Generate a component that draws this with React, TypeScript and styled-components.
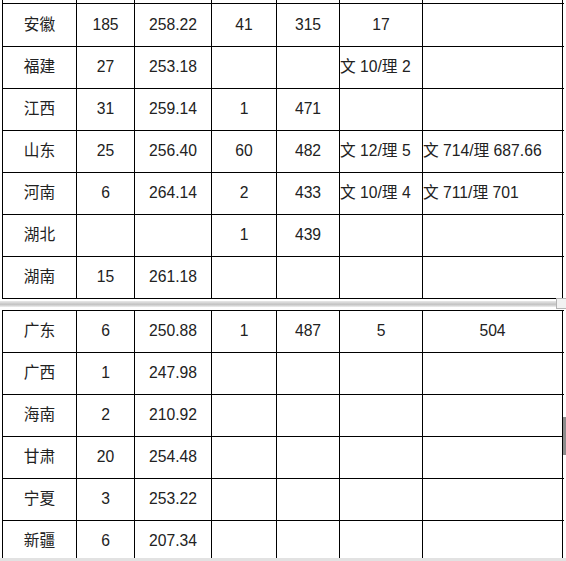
import React from "react";
import styled, { createGlobalStyle } from "styled-components";

const GlobalStyle = createGlobalStyle`
  html, body {
    margin: 0;
    padding: 0;
    background: #ffffff;
  }
`;

const Page = styled.div`
  position: relative;
  width: 566px;
  height: 561px;
  display: flex;
  flex-direction: column;
  overflow: hidden;
  background: #ffffff;
  font-family: "Liberation Sans", "Noto Sans CJK SC", Arial, sans-serif;
  font-size: 15.7px;
  line-height: 18px;
  color: #222222;
`;

const Doc = styled.div`
  flex: 1;
  overflow: hidden;
  padding-left: 2px;
`;

const Sheet = styled.div<{ $top?: boolean }>`
  width: 561px;
  border-left: 1px solid #000;
  border-top: ${(p) => (p.$top ? "1px solid #000" : "none")};
`;

const Row = styled.div<{ $h: number }>`
  display: grid;
  grid-template-columns: 74px 58px 77px 65px 63px 83px 140px;
  height: ${(p) => p.$h}px;
  box-sizing: border-box;
  border-bottom: 1px solid #000;
`;

const Cell = styled.div<{ $left?: boolean }>`
  display: flex;
  align-items: center;
  justify-content: ${(p) => (p.$left ? "flex-start" : "center")};
  border-right: 1px solid #000;
  white-space: nowrap;
  overflow: visible;
  padding-bottom: 1px;
`;

const PageBreak = styled.div`
  height: 11px;
  padding-top: 2px;
  box-sizing: border-box;
  margin-left: -2px;
`;

const Band = styled.div`
  height: 6px;
  background: linear-gradient(
    to bottom,
    #e8e8e8 0%,
    #d6d6d6 30%,
    #c2c2c2 55%,
    #dadada 80%,
    #efefef 100%
  );
`;

const EndMarker = styled.div`
  position: absolute;
  left: 556px;
  top: 298px;
  width: 10px;
  height: 11px;
  box-sizing: border-box;
  border: 1px solid #b4b4b4;
  border-right: none;
  background: #f2f2f2;
`;

const ScrollMark = styled.div`
  position: absolute;
  right: 0;
  top: 417px;
  width: 3px;
  height: 38px;
  background: #8c8c8c;
`;

const StatusBar = styled.div`
  height: 3px;
  background: #e2e2e2;
`;

type Line = { v: string; left?: boolean }[];

const t = (...vals: (string | [string])[]): Line =>
  vals.map((x) => (Array.isArray(x) ? { v: x[0], left: true } : { v: x }));

const firstPage: Line[] = [
  t("安徽", "185", "258.22", "41", "315", "17", ""),
  t("福建", "27", "253.18", "", "", ["文 10/理 2"], ""),
  t("江西", "31", "259.14", "1", "471", "", ""),
  t("山东", "25", "256.40", "60", "482", ["文 12/理 5"], ["文 714/理 687.66"]),
  t("河南", "6", "264.14", "2", "433", ["文 10/理 4"], ["文 711/理 701"]),
  t("湖北", "", "", "1", "439", "", ""),
  t("湖南", "15", "261.18", "", "", "", ""),
];

const secondPage: Line[] = [
  t("广东", "6", "250.88", "1", "487", "5", "504"),
  t("广西", "1", "247.98", "", "", "", ""),
  t("海南", "2", "210.92", "", "", "", ""),
  t("甘肃", "20", "254.48", "", "", "", ""),
  t("宁夏", "3", "253.22", "", "", "", ""),
  t("新疆", "6", "207.34", "", "", "", ""),
];

const Cells: React.FC<{ line: Line }> = ({ line }) => (
  <>
    {line.map((c, i) => (
      <Cell key={i} $left={c.left}>
        {c.v}
      </Cell>
    ))}
  </>
);

export default function App() {
  return (
    <Page>
      <GlobalStyle />
      <Doc>
        <Sheet>
          <Row $h={4}>
            <Cells line={t("", "", "", "", "", "", "")} />
          </Row>
          {firstPage.map((line, i) => (
            <Row key={i} $h={i === 0 ? 43 : 42}>
              <Cells line={line} />
            </Row>
          ))}
        </Sheet>
        <PageBreak>
          <Band />
        </PageBreak>
        <Sheet $top>
          {secondPage.map((line, i) => (
            <Row key={i} $h={42}>
              <Cells line={line} />
            </Row>
          ))}
        </Sheet>
      </Doc>
      <StatusBar />
      <EndMarker />
      <ScrollMark />
    </Page>
  );
}
